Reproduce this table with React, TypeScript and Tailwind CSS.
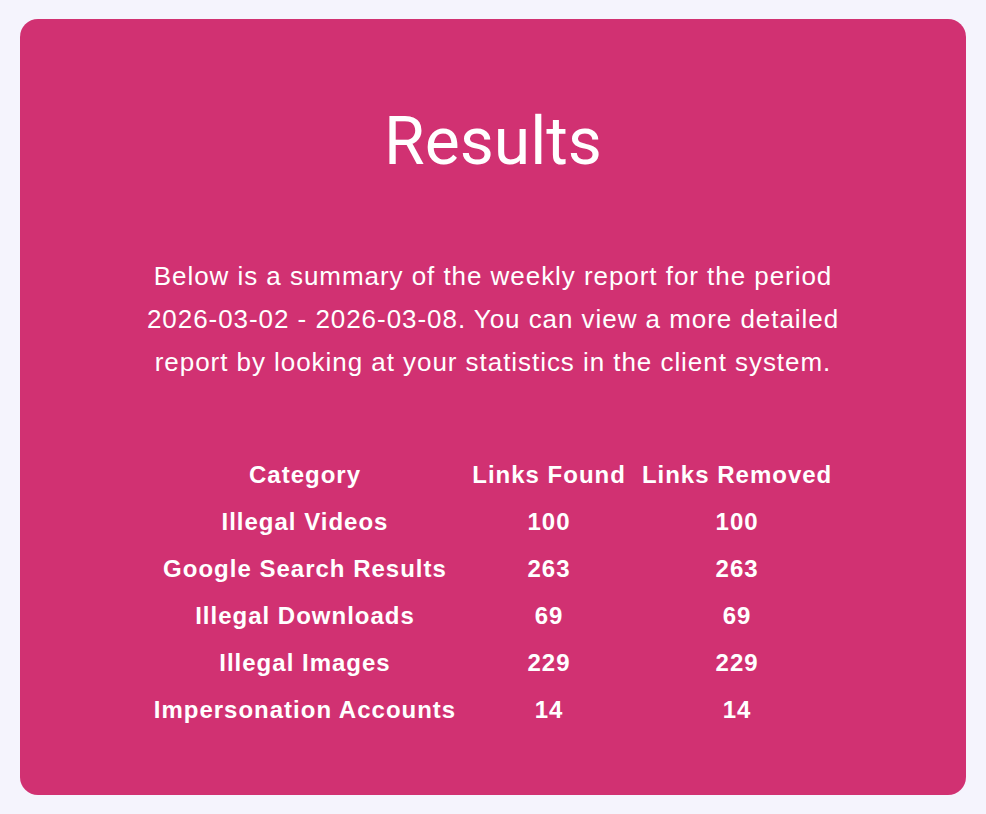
const rows = [
  { category: "Illegal Videos", found: 100, removed: 100 },
  { category: "Google Search Results", found: 263, removed: 263 },
  { category: "Illegal Downloads", found: 69, removed: 69 },
  { category: "Illegal Images", found: 229, removed: 229 },
  { category: "Impersonation Accounts", found: 14, removed: 14 },
];

export default function App() {
  return (
    <div className="min-h-[814px] bg-[#f5f4fd] px-5 py-[19px]">
      <div className="h-[776px] rounded-[18px] bg-[#d13172] text-white flex flex-col items-center pt-[76px]">
        <h1 className="font-['Roboto',sans-serif] text-[66px] leading-[94px] font-normal">Results</h1>

        <p className="mt-[66px] max-w-[740px] text-center font-['Liberation_Sans',Arial,sans-serif] text-[26px] tracking-[0.95px] leading-[43px]">
          Below is a summary of the weekly report for the period 2026-03-02 - 2026-03-08. You can view a more detailed report by looking at your statistics in the client system.
        </p>

        <table className="mt-[67px] font-['Liberation_Sans',Arial,sans-serif] font-bold text-[24px] tracking-[1px] text-center">
          <thead>
            <tr>
              <th className="px-2 h-[47px]">Category</th>
              <th className="px-2 h-[47px]">Links Found</th>
              <th className="px-2 h-[47px]">Links Removed</th>
            </tr>
          </thead>
          <tbody>
            {rows.map((r) => (
              <tr key={r.category}>
                <td className="px-2 h-[47px]">{r.category}</td>
                <td className="px-2 h-[47px]">{r.found}</td>
                <td className="px-2 h-[47px]">{r.removed}</td>
              </tr>
            ))}
          </tbody>
        </table>
      </div>
    </div>
  );
}
